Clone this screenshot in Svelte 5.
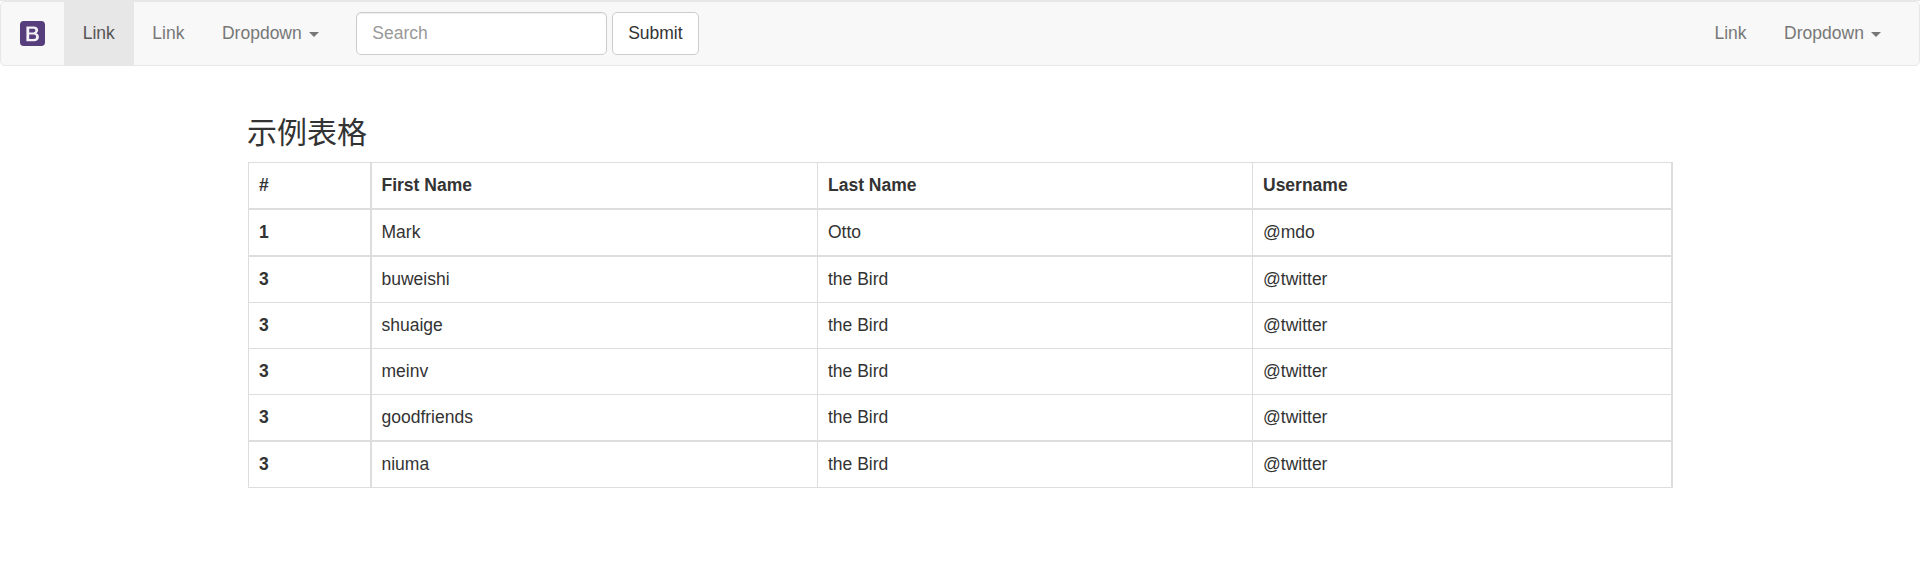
<script>
  const columns = ['#', 'First Name', 'Last Name', 'Username'];
  const rows = [
    { id: '1', first: 'Mark', last: 'Otto', user: '@mdo', thick: true },
    { id: '3', first: 'buweishi', last: 'the Bird', user: '@twitter' },
    { id: '3', first: 'shuaige', last: 'the Bird', user: '@twitter' },
    { id: '3', first: 'meinv', last: 'the Bird', user: '@twitter' },
    { id: '3', first: 'goodfriends', last: 'the Bird', user: '@twitter', thick: true },
    { id: '3', first: 'niuma', last: 'the Bird', user: '@twitter' }
  ];
</script>

<div class="page">
  <nav class="navbar">
    <a class="brand" href="#top" aria-label="Brand">
      <svg width="25" height="25" viewBox="0 0 25 25">
        <rect width="25" height="25" rx="3.8" fill="#563d7c" />
        <path
          d="M6.4 5.6h7.2c2.8 0 4.5 1.3 4.5 3.7 0 1.4-.7 2.4-2 3 1.8.4 2.8 1.8 2.8 3.7 0 2.7-1.9 4.2-4.9 4.2H6.4zM9.2 7.8v3.6h4c1.4 0 2.2-.6 2.2-1.8s-.7-1.8-2.2-1.8zM9.2 13.5V18h4.5c1.6 0 2.4-.8 2.4-2.2s-.9-2.3-2.4-2.3z"
          fill="#f4f1f8"
          fill-rule="evenodd"
        />
      </svg>
    </a>
    <a class="item active" href="#a">Link</a>
    <a class="item" href="#b">Link</a>
    <a class="item" href="#c">Dropdown <span class="caret"></span></a>
    <form class="search">
      <input type="text" placeholder="Search" />
      <button type="button">Submit</button>
    </form>
    <div class="right">
      <a class="item" href="#d">Link</a>
      <a class="item" href="#e">Dropdown <span class="caret"></span></a>
    </div>
  </nav>

  <main>
    <h3>示例表格</h3>
    <table>
      <colgroup><col class="c1" /><col class="c2" /><col class="c3" /><col class="c4" /></colgroup>
      <thead>
        <tr class="thick">
          {#each columns as name}<th>{name}</th>{/each}
        </tr>
      </thead>
      <tbody>
        {#each rows as row}
          <tr class:thick={row.thick}>
            <th>{row.id}</th>
            <td>{row.first}</td>
            <td>{row.last}</td>
            <td>{row.user}</td>
          </tr>
        {/each}
      </tbody>
    </table>
  </main>
</div>

<style>
  :global(body) {
    background: #fff;
  }
  .page {
    box-sizing: border-box;
    height: 564px;
    overflow: hidden;
    border-top: 1px solid #e7e7e7;
    font: 17.5px/25px 'Liberation Sans', Arial, 'Noto Sans CJK SC', sans-serif;
    color: #333;
  }
  .navbar {
    box-sizing: border-box;
    display: flex;
    height: 65px;
    border: 1px solid #e7e7e7;
    border-radius: 5px;
    background: #f8f8f8;
  }
  .brand {
    padding: 19px 19px 0 19px;
    height: 44px;
  }
  .brand svg {
    display: block;
  }
  .item {
    padding: 19px 18.75px;
    color: #777;
    text-decoration: none;
    white-space: nowrap;
  }
  .active {
    background: #e7e7e7;
    color: #555;
  }
  .caret {
    display: inline-block;
    margin-left: 2.5px;
    vertical-align: middle;
    border-top: 5px solid;
    border-left: 5px solid transparent;
    border-right: 5px solid transparent;
  }
  .search {
    display: flex;
    gap: 5px;
    margin: 10px 0 0 18px;
    height: 43px;
  }
  input,
  button {
    box-sizing: border-box;
    height: 43px;
    margin: 0;
    border: 1px solid #ccc;
    border-radius: 5px;
    background: #fff;
    font: inherit;
  }
  input {
    width: 251px;
    padding: 0 15px 1px 15.5px;
    box-shadow: inset 0 1px 1px rgba(0, 0, 0, 0.075);
  }
  input::placeholder {
    color: #999;
    opacity: 1;
  }
  button {
    width: 87px;
    padding: 0 0 1px;
    color: #333;
  }
  .right {
    display: flex;
    margin-left: auto;
    padding-right: 19px;
  }
  main {
    width: 1425px;
    margin: 0 0 0 248px;
  }
  h3 {
    margin: 0 0 0 -1px;
    padding: 50px 0 13px;
    font-size: 30px;
    line-height: 33px;
    font-weight: 400;
  }
  table {
    table-layout: fixed;
    width: 1425px;
    border-collapse: separate;
    border-spacing: 0;
    border: solid #ddd;
    border-width: 1px 0 0 1px;
  }
  .c1 {
    width: 123px;
  }
  .c2 {
    width: 446px;
  }
  .c3 {
    width: 435px;
  }
  .c4 {
    width: 420px;
  }
  th,
  td {
    padding: 10px;
    border: solid #ddd;
    border-width: 0 1px 1px 0;
    text-align: left;
  }
  th:nth-child(2),
  td:nth-child(2) {
    padding-left: 9.5px;
  }
  th:first-child,
  th:last-child,
  td:last-child {
    border-right-width: 2px;
  }
  .thick > * {
    border-bottom-width: 2px;
  }
</style>
